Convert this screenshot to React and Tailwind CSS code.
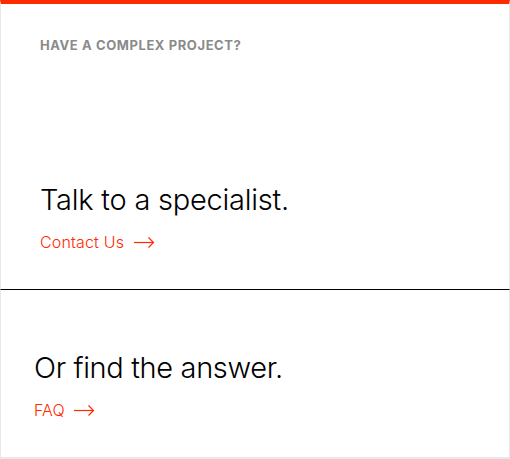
export default function App() {
  const Arrow = () => (
    <svg width="21" height="12" viewBox="0 0 21 12" fill="none" stroke="#ff2a00" strokeWidth="1.2">
      <path d="M0 6.5 H19.5" />
      <path d="M14.5 1.5 L19.5 6.5 L14.5 11.5" />
    </svg>
  );
  return (
    <div className="w-[510px] h-[459px] bg-white" style={{ fontFamily: 'Inter, "Liberation Sans", sans-serif' }}>
      <div className="h-[290px] border-t-4 border-t-[#ff2a00] border-x border-x-[#e8e8e8] border-b border-b-black px-[39px] pt-[33px] flex flex-col">
        <div className="text-[13px] font-bold tracking-[0.045em] text-[#8a8a8a] leading-[16px]">HAVE A COMPLEX PROJECT?</div>
        <div className="mt-[129px] text-[29px] font-light leading-[36px] text-black tracking-[-0.008em]">Talk to a specialist.</div>
        <div className="mt-[14px] flex items-center gap-[10px] text-[16px] font-light leading-[20px] tracking-[0.01em] text-[#ff2a00]">
          <span>Contact Us</span>
          <Arrow />
        </div>
      </div>
      <div className="h-[169px] border-x border-x-[#e8e8e8] border-b-2 border-b-[#e8e8e8] px-[33px] pt-[60px] flex flex-col">
        <div className="text-[29px] font-light leading-[36px] text-black tracking-[-0.012em]">Or find the answer.</div>
        <div className="mt-[14px] flex items-center gap-[9px] text-[16px] font-light leading-[20px] tracking-[0.01em] text-[#ff2a00]">
          <span>FAQ</span>
          <Arrow />
        </div>
      </div>
    </div>
  );
}
